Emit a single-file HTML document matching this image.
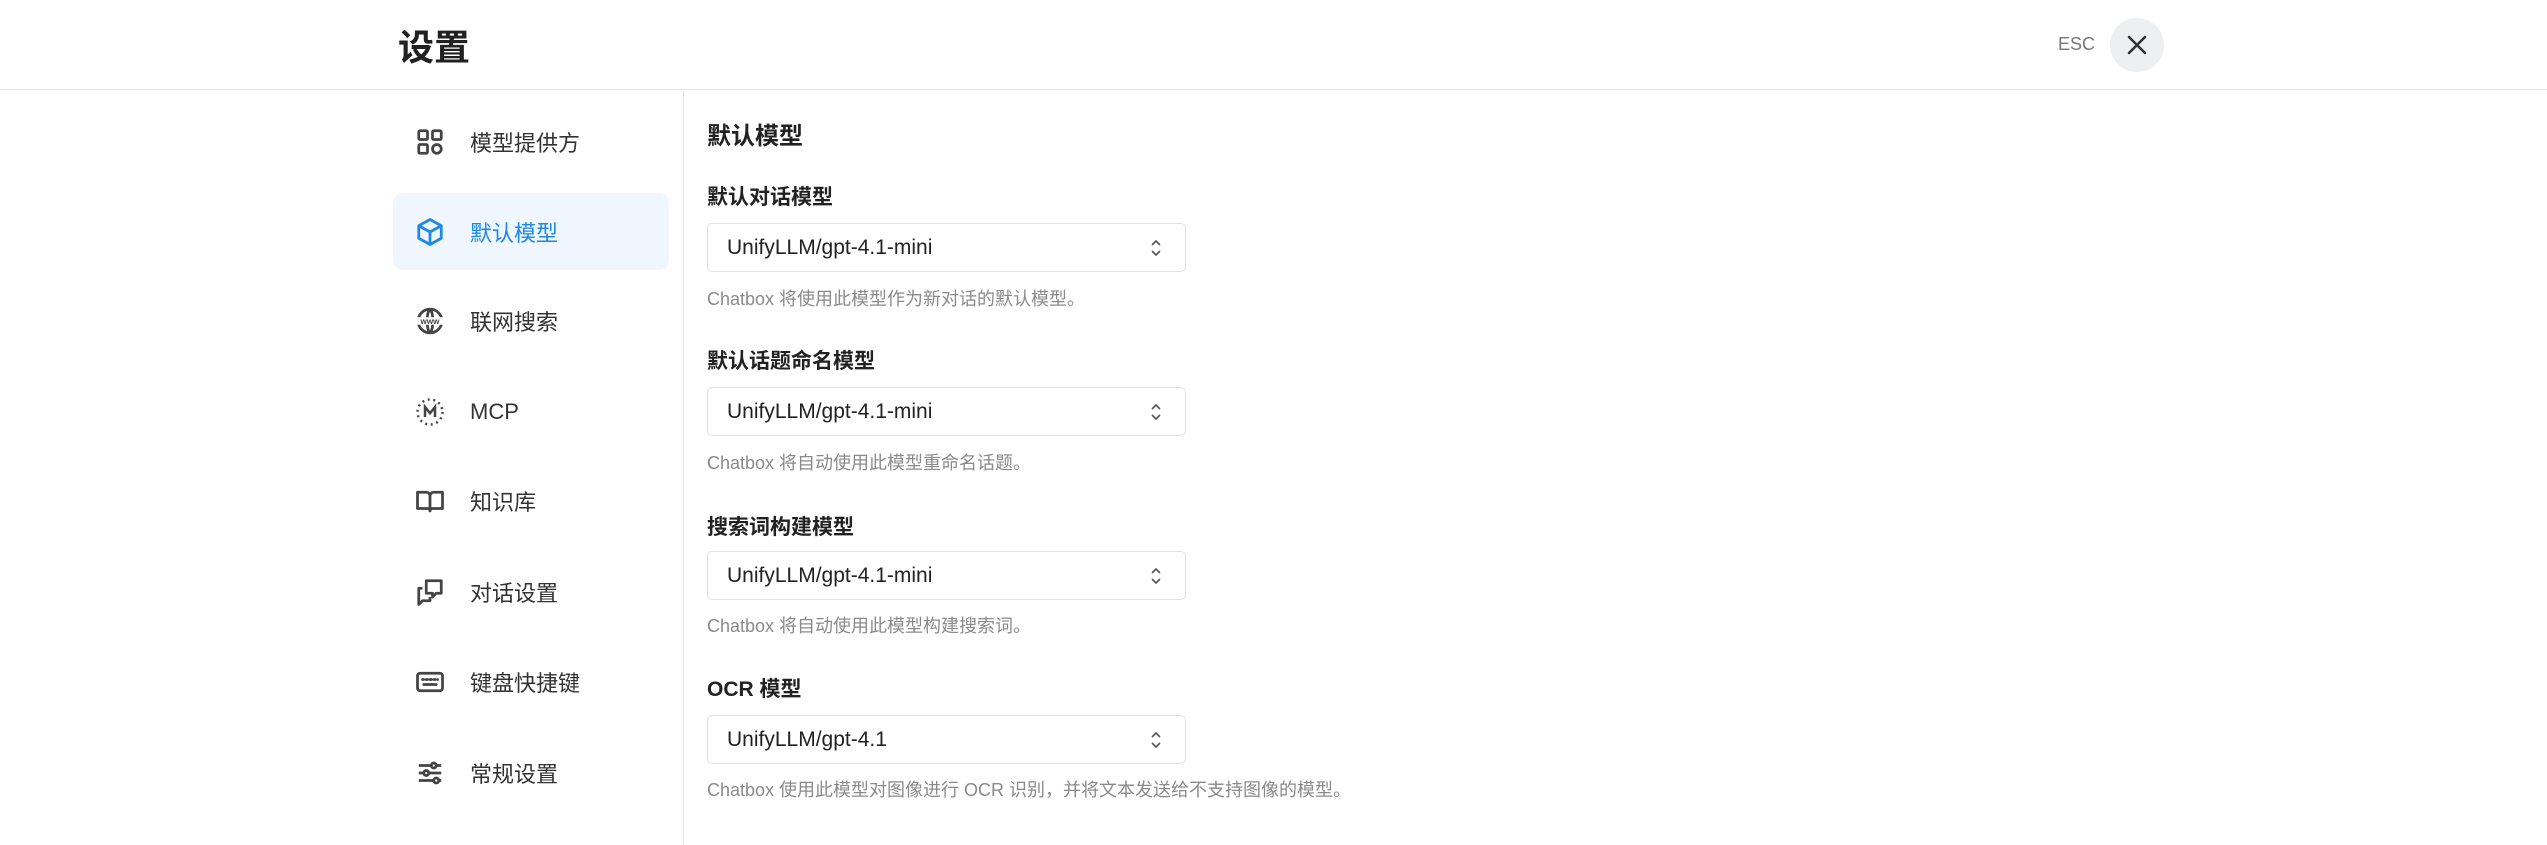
<!DOCTYPE html>
<html><head><meta charset="utf-8"><style>
*{margin:0;padding:0;box-sizing:border-box}
body{width:2547px;height:845px;background:#fff;font-family:"Liberation Sans","Noto Sans CJK SC",sans-serif;position:relative;overflow:hidden;color:#212121}
.abs{position:absolute}
.hdr{left:0;top:89px;width:2547px;height:1px;background:#e6e6e6}
.div{left:683px;top:90px;width:1px;height:755px;background:#e6e6e6}
.title{left:398px;top:19px;font-size:36px;font-weight:bold;color:#212121}
.esc{left:2058px;top:34px;font-size:18px;color:#777}
.close{left:2110px;top:18px;width:54px;height:54px;border-radius:50%;background:#eeeff1}
.item{left:393px;width:276px;height:77px;border-radius:10px}
.item .t{position:absolute;left:77px;top:50%;transform:translateY(-50%);font-size:22px;color:#333}
.item svg{position:absolute;left:22px;top:50%;transform:translateY(-50%)}
.act{background:#eff6fd}
.act .t{color:#1e88e5}
.h{left:707px;font-size:24px;font-weight:bold;color:#222}
.lab{left:707px;font-size:21px;font-weight:bold;color:#222}
.sel{left:707px;width:479px;height:49px;border:1px solid #e2e2e2;border-radius:5px}
.sel .v{position:absolute;left:19px;top:12px;font-size:21px;color:#222}
.sel svg{position:absolute;right:22px;top:14px}
.desc{left:707px;font-size:18px;color:#8a8a8a}
</style></head><body>
<div class="abs title">设置</div>
<div class="abs esc">ESC</div>
<div class="abs close"><svg width="54" height="54" viewBox="0 0 54 54"><path d="M19 19L35 35M35 19L19 35" stroke="#333" stroke-width="2.6" stroke-linecap="round"/></svg></div>
<div class="abs hdr"></div>
<div class="abs div"></div>

<div class="abs item" style="top:103px"><svg width="30" height="30" viewBox="0 0 24 24" fill="none" stroke="#444" stroke-width="2.2"><rect x="3" y="3" width="7" height="7" rx="1"/><rect x="14" y="3" width="7" height="7" rx="1"/><rect x="3" y="14" width="7" height="7" rx="1"/><circle cx="17.5" cy="17.5" r="3.5"/></svg><span class="t">模型提供方</span></div>
<div class="abs item act" style="top:193px"><svg width="30" height="30" viewBox="0 0 24 24" fill="none" stroke="#1e88e5" stroke-width="2.2" stroke-linejoin="round"><path d="M12 2l9 5v10l-9 5-9-5V7z"/><path d="M3 7l9 5 9-5M12 12v10"/></svg><span class="t">默认模型</span></div>
<div class="abs item" style="top:282px"><svg width="30" height="30" viewBox="0 0 24 24" fill="none" stroke="#444" stroke-width="2.2"><circle cx="12" cy="12" r="9.5"/><path d="M12 2.5c-3 3-3 16 0 19M12 2.5c3 3 3 16 0 19"/><rect x="1" y="9" width="22" height="6" fill="#fff" stroke="none"/><text x="12" y="14.2" font-size="6.5" text-anchor="middle" fill="#444" stroke="none" font-weight="bold" font-family="Liberation Sans">www</text></svg><span class="t">联网搜索</span></div>
<div class="abs item" style="top:373px"><svg width="30" height="30" viewBox="0 0 24 24" fill="none" stroke="#444" stroke-width="2"><circle cx="12" cy="12" r="10" stroke-dasharray="1.5 3"/><path d="M8 16V8l4 5 4-5v8"/></svg><span class="t">MCP</span></div>
<div class="abs item" style="top:462px"><svg width="30" height="30" viewBox="0 0 24 24" fill="none" stroke="#444" stroke-width="2.2" stroke-linejoin="round"><path d="M2 5h7a3 3 0 0 1 3 3v12a2 2 0 0 0-2-2H2zM22 5h-7a3 3 0 0 0-3 3v12a2 2 0 0 1 2-2h8z"/></svg><span class="t">知识库</span></div>
<div class="abs item" style="top:553px"><svg width="30" height="30" viewBox="0 0 24 24" fill="none" stroke="#444" stroke-width="2.2" stroke-linejoin="round"><path d="M9 3h12v10h-4l-3 3v-3H9z"/><path d="M6 9H3v10v3l3-3h6v-3"/></svg><span class="t">对话设置</span></div>
<div class="abs item" style="top:643px"><svg width="30" height="30" viewBox="0 0 24 24" fill="none" stroke="#444" stroke-width="2.2"><rect x="2" y="5" width="20" height="14" rx="2"/><path d="M6 10h1M9 10h1M12 10h1M15 10h1M18 10h0M7 14h10" stroke-linecap="round"/></svg><span class="t">键盘快捷键</span></div>
<div class="abs item" style="top:734px"><svg width="30" height="30" viewBox="0 0 24 24" fill="none" stroke="#444" stroke-width="2.2"><path d="M3 6h10M17 6h4M3 12h4M11 12h10M3 18h12M19 18h2"/><circle cx="15" cy="6" r="2"/><circle cx="9" cy="12" r="2"/><circle cx="17" cy="18" r="2"/></svg><span class="t">常规设置</span></div>

<div class="abs h" style="top:116px">默认模型</div>

<div class="abs lab" style="top:181px">默认对话模型</div>
<div class="abs sel" style="top:223px"><span class="v">UnifyLLM/gpt-4.1-mini</span><svg width="14" height="20" viewBox="0 0 14 20" fill="none" stroke="#555" stroke-width="1.6"><path d="M3 7l4-4 4 4M3 13l4 4 4-4"/></svg></div>
<div class="abs desc" style="top:285px">Chatbox 将使用此模型作为新对话的默认模型。</div>

<div class="abs lab" style="top:345px">默认话题命名模型</div>
<div class="abs sel" style="top:387px"><span class="v">UnifyLLM/gpt-4.1-mini</span><svg width="14" height="20" viewBox="0 0 14 20" fill="none" stroke="#555" stroke-width="1.6"><path d="M3 7l4-4 4 4M3 13l4 4 4-4"/></svg></div>
<div class="abs desc" style="top:449px">Chatbox 将自动使用此模型重命名话题。</div>

<div class="abs lab" style="top:511px">搜索词构建模型</div>
<div class="abs sel" style="top:551px"><span class="v">UnifyLLM/gpt-4.1-mini</span><svg width="14" height="20" viewBox="0 0 14 20" fill="none" stroke="#555" stroke-width="1.6"><path d="M3 7l4-4 4 4M3 13l4 4 4-4"/></svg></div>
<div class="abs desc" style="top:612px">Chatbox 将自动使用此模型构建搜索词。</div>

<div class="abs lab" style="top:673px">OCR 模型</div>
<div class="abs sel" style="top:715px"><span class="v">UnifyLLM/gpt-4.1</span><svg width="14" height="20" viewBox="0 0 14 20" fill="none" stroke="#555" stroke-width="1.6"><path d="M3 7l4-4 4 4M3 13l4 4 4-4"/></svg></div>
<div class="abs desc" style="top:776px">Chatbox 使用此模型对图像进行 OCR 识别，并将文本发送给不支持图像的模型。</div>
</body></html>
